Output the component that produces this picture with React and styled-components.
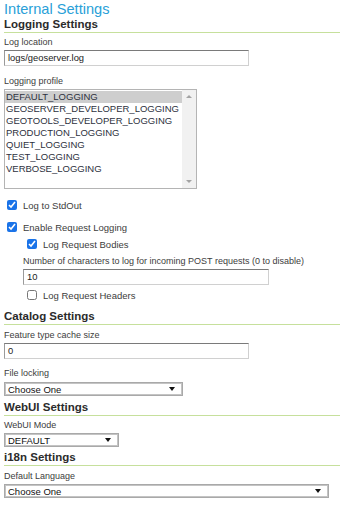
import React from "react";
import styled, { createGlobalStyle } from "styled-components";

const GlobalStyle = createGlobalStyle`
  html, body {
    margin: 0;
    padding: 0;
    background: #ffffff;
  }
  body {
    font-family: "Liberation Sans", Arial, sans-serif;
    color: #3b3b3b;
  }
`;

const Page = styled.div`
  width: 340px;
  padding-left: 4px;
  box-sizing: border-box;
`;

const Title = styled.h1`
  margin: 2px 0 0;
  font-size: 14.6px;
  line-height: 15px;
  font-weight: normal;
  color: #2a9fd8;
`;

const SectionHeading = styled.h2`
  margin: ${(props) => props.$gap || 0}px 0 0;
  padding-bottom: 1px;
  font-size: 11.5px;
  line-height: 14px;
  font-weight: bold;
  color: #2b2b2b;
  border-bottom: 1px solid #c6e09c;
`;

const Label = styled.div`
  margin-top: ${(props) => props.$gap || 0}px;
  margin-left: ${(props) => props.$indent || 0}px;
  font-size: 9px;
  line-height: 12px;
  color: #3d3d3d;
`;

const TextInput = styled.div`
  box-sizing: border-box;
  margin-top: ${(props) => props.$gap || 2}px;
  margin-left: ${(props) => props.$indent || 0}px;
  width: ${(props) => props.$width}px;
  height: 16px;
  padding: 0 3px;
  border: 1px solid;
  border-color: #7a7a7a #d0d0d0 #d0d0d0 #9a9a9a;
  font-size: 9.4px;
  line-height: 14px;
  color: #222;
`;

const ListBox = styled.div`
  box-sizing: border-box;
  margin-top: 2px;
  width: 193px;
  height: 100px;
  border: 1px solid #b4b4b4;
  display: flex;
`;

const ListItems = styled.div`
  flex: 1;
  padding-top: 1px;
`;

const ListItem = styled.div`
  height: 12px;
  line-height: 12px;
  padding-left: 1px;
  font-size: 9.5px;
  color: #2d3140;
  background: ${(props) => (props.$selected ? "#cecece" : "transparent")};
`;

const Scrollbar = styled.div`
  width: 14px;
  background: #f1f1f1;
  display: flex;
  flex-direction: column;
  justify-content: space-between;
  align-items: center;
  padding: 5px 0;
  box-sizing: border-box;
`;

const Arrow = styled.div`
  width: 0;
  height: 0;
  border-left: 3.5px solid transparent;
  border-right: 3.5px solid transparent;
  ${(props) =>
    props.$down
      ? "border-top: 3.5px solid #a3a3a3;"
      : "border-bottom: 3.5px solid #a3a3a3;"}
`;

const CheckRow = styled.label`
  display: flex;
  align-items: center;
  gap: 6px;
  height: 14px;
  margin-top: ${(props) => props.$gap || 0}px;
  margin-left: ${(props) => props.$indent || 3}px;
  font-size: 9.5px;
  color: #3d3d3d;
`;

const Check = styled.input`
  width: 10px;
  height: 10px;
  margin: 0;
  accent-color: #1a73e8;
`;

const Select = styled.div`
  box-sizing: border-box;
  margin-top: ${(props) => props.$gap || 3}px;
  width: ${(props) => props.$width}px;
  height: 14px;
  border: 1px solid #a9a9a9;
  outline: 1px solid #c4c4c4;
  outline-offset: -2px;
  display: flex;
  align-items: center;
  justify-content: space-between;
  padding: 0 7px 0 3px;
  font-size: 9.5px;
  color: #111;
`;

const Caret = styled.span`
  width: 0;
  height: 0;
  border-left: 3px solid transparent;
  border-right: 3px solid transparent;
  border-top: 4px solid #111;
`;

const profiles = [
  "DEFAULT_LOGGING",
  "GEOSERVER_DEVELOPER_LOGGING",
  "GEOTOOLS_DEVELOPER_LOGGING",
  "PRODUCTION_LOGGING",
  "QUIET_LOGGING",
  "TEST_LOGGING",
  "VERBOSE_LOGGING",
];

function App() {
  return (
    <Page>
      <GlobalStyle />
      <Title>Internal Settings</Title>
      <SectionHeading>Logging Settings</SectionHeading>

      <Label $gap={3}>Log location</Label>
      <TextInput $width={245}>logs/geoserver.log</TextInput>

      <Label $gap={9}>Logging profile</Label>
      <ListBox>
        <ListItems>
          {profiles.map((p, i) => (
            <ListItem key={p} $selected={i === 0}>
              {p}
            </ListItem>
          ))}
        </ListItems>
        <Scrollbar>
          <Arrow />
          <Arrow $down />
        </Scrollbar>
      </ListBox>

      <CheckRow $gap={9}>
        <Check type="checkbox" defaultChecked />
        Log to StdOut
      </CheckRow>
      <CheckRow $gap={8}>
        <Check type="checkbox" defaultChecked />
        Enable Request Logging
      </CheckRow>
      <CheckRow $gap={3} $indent={23}>
        <Check type="checkbox" defaultChecked />
        Log Request Bodies
      </CheckRow>
      <Label $gap={4} $indent={19}>
        Number of characters to log for incoming POST requests (0 to disable)
      </Label>
      <TextInput $width={246} $indent={19}>
        10
      </TextInput>
      <CheckRow $gap={3} $indent={23}>
        <Check type="checkbox" />
        Log Request Headers
      </CheckRow>

      <SectionHeading $gap={7}>Catalog Settings</SectionHeading>
      <Label $gap={4}>Feature type cache size</Label>
      <TextInput $width={245}>0</TextInput>
      <Label $gap={8}>File locking</Label>
      <Select $width={179}>
        Choose One
        <Caret />
      </Select>

      <SectionHeading $gap={4}>WebUI Settings</SectionHeading>
      <Label $gap={3}>WebUI Mode</Label>
      <Select $width={115} $gap={2}>
        DEFAULT
        <Caret />
      </Select>

      <SectionHeading $gap={3}>i18n Settings</SectionHeading>
      <Label $gap={4}>Default Language</Label>
      <Select $width={325} $gap={2}>
        Choose One
        <Caret />
      </Select>
    </Page>
  );
}

export default App;
